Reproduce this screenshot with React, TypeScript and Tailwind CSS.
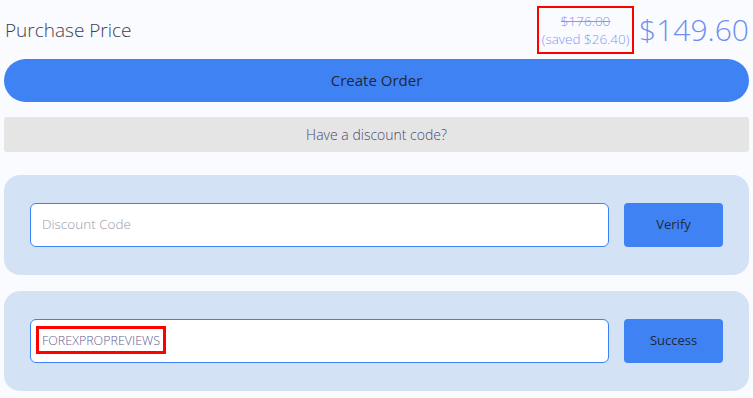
import { useState } from 'react';

const FONT = "font-['Open_Sans','Liberation_Sans',sans-serif]";

function CodePanel({
  value,
  placeholder,
  action,
  highlight,
}: {
  value?: string;
  placeholder?: string;
  action: string;
  highlight?: boolean;
}) {
  const [code, setCode] = useState(value ?? '');

  return (
    <div className="flex items-center gap-[15px] rounded-[16px] bg-[#d3e3f5] px-[26px] py-[28px]">
      <div className="relative flex h-[44px] flex-1 items-center rounded-[6px] border border-[#3b82f6] bg-white px-[11px]">
        <input
          value={code}
          onChange={(e) => setCode(e.target.value)}
          placeholder={placeholder}
          className="w-full bg-transparent text-[12.5px] font-light text-[#5f6390] outline-none placeholder:text-[13.5px] placeholder:text-[#9a9aa6]"
        />
        {highlight && (
          <span className="pointer-events-none absolute left-[5px] top-[6px] h-[28px] w-[130px] border-[3px] border-[#ff0000]" />
        )}
      </div>
      <button className="h-[44px] w-[99px] rounded-[4px] bg-[#3f82f4] text-[13px] text-[#1f2937]">
        {action}
      </button>
    </div>
  );
}

export default function App() {
  return (
    <div className={`min-h-[398px] bg-[#f9fbff] px-[4px] pt-[2px] ${FONT}`}>
      <div className="flex h-[56px] items-center justify-between pl-[1px]">
        <h1 className="text-[19px] font-light text-[#3d3d55]">Purchase Price</h1>
        <div className="flex items-center gap-[5px]">
          <div className="flex h-[48px] w-[97px] flex-col items-center justify-center border-2 border-[#ff0000] text-[13.5px] font-light leading-[18px] text-[#8398f2]">
            <span className="line-through">$176.00</span>
            <span>(saved $26.40)</span>
          </div>
          <span className="text-[30px] font-light leading-none text-[#6f8ef0]">$149.60</span>
        </div>
      </div>

      <button className="mt-[1px] flex h-[43px] w-full items-center justify-center rounded-full bg-[#3f82f4] text-[15px] text-[#1f2937]">
        Create Order
      </button>

      <div className="mt-[15px] flex h-[35px] items-center justify-center rounded-[3px] bg-[#e5e5e5] text-[14px] font-light text-[#4b4b70]">
        Have a discount code?
      </div>

      <div className="mt-[23px] flex flex-col gap-[16px]">
        <CodePanel placeholder="Discount Code" action="Verify" />
        <CodePanel value="FOREXPROPREVIEWS" action="Success" highlight />
      </div>
    </div>
  );
}
